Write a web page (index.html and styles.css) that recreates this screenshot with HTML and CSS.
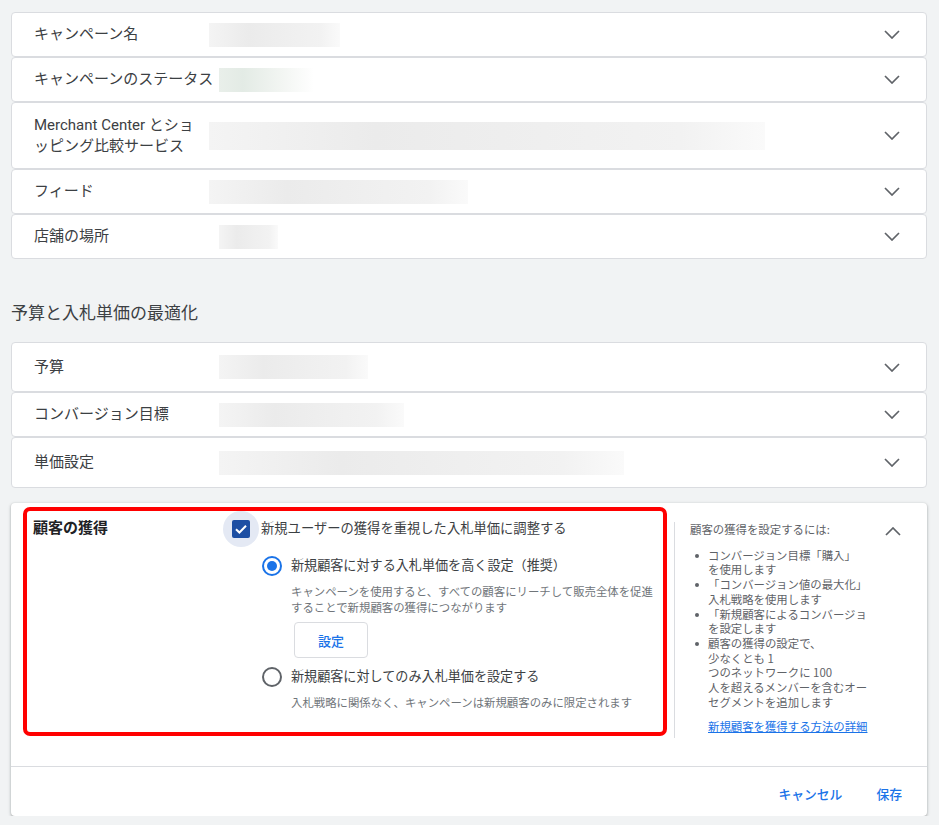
FILE: index.html
```html
<!DOCTYPE html>
<html lang="ja">
<head>
    <meta charset="UTF-8">
    <meta name="viewport" content="width=device-width, initial-scale=1.0">
    <title>キャンペーン設定</title>
    <link rel="stylesheet" href="styles.css">
</head>
<body>
    <div class="page">
        <div class="group">
            <div class="row">
                <div class="label">キャンペーン名</div>
                <div class="value"><span class="blur" style="width:131px"></span></div>
                <svg class="chevron" viewBox="0 0 16 9"><polyline points="1,1 8,8 15,1"/></svg>
            </div>
            <div class="row">
                <div class="label">キャンペーンのステータス</div>
                <div class="value"><span class="blur green" style="width:95px; margin-left:10px"></span></div>
                <svg class="chevron" viewBox="0 0 16 9"><polyline points="1,1 8,8 15,1"/></svg>
            </div>
            <div class="row row-double">
                <div class="label">Merchant Center とショ<br>ッピング比較サービス</div>
                <div class="value"><span class="blur tall" style="width:556px"></span></div>
                <svg class="chevron" viewBox="0 0 16 9"><polyline points="1,1 8,8 15,1"/></svg>
            </div>
            <div class="row">
                <div class="label">フィード</div>
                <div class="value"><span class="blur" style="width:259px"></span></div>
                <svg class="chevron" viewBox="0 0 16 9"><polyline points="1,1 8,8 15,1"/></svg>
            </div>
            <div class="row">
                <div class="label">店舗の場所</div>
                <div class="value"><span class="blur" style="width:59px; margin-left:10px"></span></div>
                <svg class="chevron" viewBox="0 0 16 9"><polyline points="1,1 8,8 15,1"/></svg>
            </div>
        </div>

        <h2 class="section-title">予算と入札単価の最適化</h2>

        <div class="group">
            <div class="row row-50">
                <div class="label">予算</div>
                <div class="value"><span class="blur" style="width:149px; margin-left:10px"></span></div>
                <svg class="chevron" viewBox="0 0 16 9"><polyline points="1,1 8,8 15,1"/></svg>
            </div>
            <div class="row">
                <div class="label">コンバージョン目標</div>
                <div class="value"><span class="blur" style="width:185px; margin-left:10px"></span></div>
                <svg class="chevron" viewBox="0 0 16 9"><polyline points="1,1 8,8 15,1"/></svg>
            </div>
            <div class="row row-52">
                <div class="label">単価設定</div>
                <div class="value"><span class="blur" style="width:405px; margin-left:10px"></span></div>
                <svg class="chevron" viewBox="0 0 16 9"><polyline points="1,1 8,8 15,1"/></svg>
            </div>
        </div>

        <div class="card">
            <div class="card-body">
                <div class="highlight">
                    <div class="field-title">顧客の獲得</div>
                    <div class="options">
                        <div class="check-row">
                            <span class="halo">
                                <span class="checkbox">
                                    <svg viewBox="0 0 18 18"><polyline points="4,9.2 7.4,12.5 14,5.8"/></svg>
                                </span>
                            </span>
                            <span class="check-text">新規ユーザーの獲得を重視した入札単価に調整する</span>
                        </div>

                        <div class="radio-row">
                            <span class="radio checked"></span>
                            <span class="radio-text">新規顧客に対する入札単価を高く設定（推奨）</span>
                        </div>
                        <p class="desc">キャンペーンを使用すると、すべての顧客にリーチして販売全体を促進<br>することで新規顧客の獲得につながります</p>
                        <button class="outline-btn">設定</button>

                        <div class="radio-row">
                            <span class="radio"></span>
                            <span class="radio-text">新規顧客に対してのみ入札単価を設定する</span>
                        </div>
                        <p class="desc">入札戦略に関係なく、キャンペーンは新規顧客のみに限定されます</p>
                    </div>
                </div>

                <aside class="help">
                    <div class="help-text">
                        <div class="help-title">顧客の獲得を設定するには:</div>
                        <ul class="help-list">
                            <li>コンバージョン目標「購入」<br>を使用します</li>
                            <li>「コンバージョン値の最大化」<br>入札戦略を使用します</li>
                            <li>「新規顧客によるコンバージョ<br>を設定します</li>
                            <li>顧客の獲得の設定で、<br>少なくとも 1<br>つのネットワークに 100<br>人を超えるメンバーを含むオー<br>セグメントを追加します</li>
                        </ul>
                        <a class="help-link" href="#">新規顧客を獲得する方法の詳細</a>
                    </div>
                    <svg class="chevron up" viewBox="0 0 16 9"><polyline points="1,8 8,1 15,8"/></svg>
                </aside>
            </div>
            <div class="card-footer">
                <button class="text-btn">キャンセル</button>
                <button class="text-btn">保存</button>
            </div>
        </div>
    </div>
</body>
</html>
```

FILE: styles.css
```css
body {
    margin: 0;
    background: #f1f3f4;
    font-family: Roboto, "Noto Sans CJK JP", sans-serif;
    color: #3c4043;
}
.page {
    width: 916px;
    padding: 12px 0 0 11px;
}
.group {
    display: flex;
    flex-direction: column;
}
.row {
    box-sizing: border-box;
    height: 45px;
    display: grid;
    grid-template-columns: 175px 1fr 16px;
    align-items: center;
    padding: 0 26px 0 22px;
    background: #fff;
    border: 1px solid #dadce0;
    border-radius: 4px;
}
.row-double {
    height: 67px;
}
.row-50 {
    height: 50px;
}
.row-52 {
    height: 51px;
}
.label {
    font-size: 15px;
    line-height: 21px;
    white-space: nowrap;
}
.value {
    display: flex;
}
.blur {
    display: block;
    height: 24px;
    background: linear-gradient(90deg, #f4f4f4, #ebebeb 30%, #efefef 60%, #f2f2f2 85%, #fafafa);
}
.blur.green {
    background: linear-gradient(90deg, #e9efea, #e3ebe5 25%, #f2f5f2 65%, #fff);
}
.blur.tall {
    height: 28px;
}
.chevron {
    width: 16px;
    height: 9px;
    fill: none;
    stroke: #5f6368;
    stroke-width: 1.7;
}
.section-title {
    margin: 42px 0 17px;
    font-size: 17px;
    line-height: 24px;
    font-weight: 400;
    color: #3c4043;
}
.card {
    margin-top: 15px;
    background: #fff;
    border-radius: 4px;
    box-shadow: 0 1px 2px rgba(60, 64, 67, 0.3), 0 1px 3px 1px rgba(60, 64, 67, 0.15);
}
.card-body {
    box-sizing: border-box;
    display: flex;
    align-items: flex-start;
    height: 263px;
    padding-top: 4px;
}
.highlight {
    box-sizing: border-box;
    width: 644px;
    height: 229px;
    display: flex;
    margin: 0 7px 0 12px;
    padding: 0 0 0 6px;
    border: 4px solid #f00;
    border-radius: 7px;
}
.field-title {
    width: 190px;
    margin-top: 7px;
    font-size: 15px;
    line-height: 20px;
    font-weight: 700;
    color: #202124;
}
.check-row {
    display: flex;
    align-items: center;
    height: 36px;
}
.halo {
    width: 36px;
    height: 36px;
    border-radius: 50%;
    background: #e4e9f4;
    display: flex;
    align-items: center;
    justify-content: center;
}
.checkbox {
    width: 18px;
    height: 18px;
    border-radius: 2px;
    background: #1d4fa3;
    display: flex;
}
.checkbox svg {
    width: 18px;
    height: 18px;
    fill: none;
    stroke: #fff;
    stroke-width: 2;
}
.check-text {
    margin-left: 2px;
    font-size: 13.3px;
    line-height: 20px;
}
.radio-row {
    display: flex;
    align-items: center;
    margin: 9px 0 0 39px;
    height: 20px;
}
.radio {
    box-sizing: border-box;
    width: 20px;
    height: 20px;
    border-radius: 50%;
    border: 2px solid #5f6368;
    display: flex;
    align-items: center;
    justify-content: center;
}
.radio.checked {
    border-color: #1a73e8;
}
.radio.checked::after {
    content: "";
    width: 10px;
    height: 10px;
    border-radius: 50%;
    background: #1a73e8;
}
.radio-text {
    margin-left: 9px;
    font-size: 13.1px;
    line-height: 20px;
}
.desc {
    margin: 7px 0 0 68px;
    font-family: "Noto Sans CJK JP", sans-serif;
    font-size: 11.4px;
    line-height: 16px;
    color: #70757a;
    white-space: nowrap;
}
.outline-btn {
    display: block;
    margin: 7px 0 0 71px;
    width: 74px;
    height: 36px;
    background: #fff;
    border: 1px solid #dadce0;
    border-radius: 4px;
    font-family: inherit;
    font-size: 13px;
    font-weight: 500;
    color: #1a73e8;
}
.help {
    box-sizing: border-box;
    flex: 1;
    display: flex;
    justify-content: space-between;
    height: 216px;
    margin-top: 15px;
    padding: 0 26px 0 15px;
    border-left: 1px solid #dadce0;
}
.help-text {
    font-family: "Noto Sans CJK JP", sans-serif;
    font-size: 11.4px;
    line-height: 14.7px;
    color: #5f6368;
    white-space: nowrap;
}
.help-list {
    list-style: none;
    margin: 11px 0 0;
    padding: 0 0 0 18px;
}
.help-list li {
    position: relative;
}
.help-list li::before {
    content: "";
    position: absolute;
    left: -13px;
    top: 6px;
    width: 4px;
    height: 4px;
    border-radius: 50%;
    background: #5f6368;
}
.help-link {
    display: block;
    margin: 10px 0 0 18px;
    color: #1a73e8;
}
.chevron.up {
    margin-top: 5px;
}
.card-footer {
    box-sizing: border-box;
    display: flex;
    justify-content: flex-end;
    align-items: center;
    gap: 34px;
    height: 50px;
    padding: 3px 25px 0 0;
    border-top: 1px solid #dadce0;
}
.text-btn {
    background: none;
    border: none;
    padding: 0;
    font-family: inherit;
    font-size: 12.8px;
    font-weight: 500;
    color: #1a73e8;
}
```
